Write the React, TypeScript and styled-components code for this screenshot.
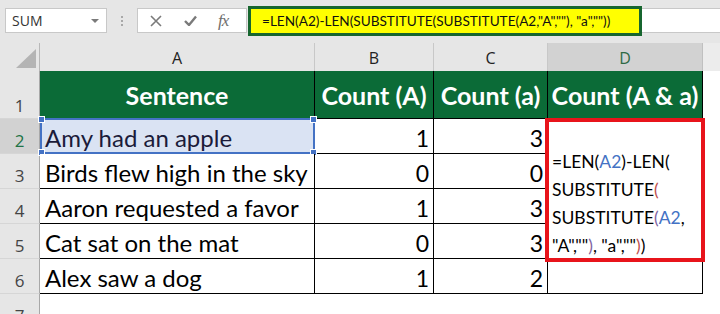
import React from 'react';
import styled, { createGlobalStyle } from 'styled-components';

const Global = createGlobalStyle`
  html, body { margin: 0; padding: 0; background: #fff; }
  body { width: 720px; height: 314px; overflow: hidden; font-family: Lato, "Liberation Sans", sans-serif; }
`;

const Page = styled.div`
  width: 720px;
  height: 314px;
  overflow: hidden;
  display: flex;
  flex-direction: column;
  background: #fff;
`;

const Toolbar = styled.div`
  height: 43px;
  flex: none;
  box-sizing: border-box;
  background: #e6e6e6;
  display: flex;
  align-items: flex-start;
  padding: 8px 0 0 5px;
`;

const NameBox = styled.div`
  width: 102px;
  height: 25px;
  box-sizing: border-box;
  background: #fff;
  border: 1px solid #c8c8c8;
  display: flex;
  align-items: center;
  justify-content: space-between;
  padding: 0 7px 0 6px;
  font-family: "Open Sans", sans-serif;
  font-size: 14px;
  color: #333;
`;

const Caret = styled.span`
  width: 0;
  height: 0;
  border-left: 4px solid transparent;
  border-right: 4px solid transparent;
  border-top: 4px solid #7a7a7a;
`;

const Grip = styled.div`
  width: 30px;
  height: 25px;
  display: flex;
  flex-direction: column;
  align-items: center;
  justify-content: center;
  gap: 2px;
`;

const Dot = styled.span`
  width: 2px;
  height: 2px;
  background: #a8a8a8;
`;

const FxBox = styled.div`
  width: 110px;
  height: 25px;
  box-sizing: border-box;
  background: #fff;
  border: 1px solid #c8c8c8;
  display: flex;
  align-items: center;
  padding-left: 12px;
  gap: 22px;
  color: #7a7a7a;
`;

const FxLabel = styled.span`
  font-family: "Liberation Serif", serif;
  font-style: italic;
  font-size: 17px;
  color: #6e6e6e;
  letter-spacing: -1px;
  margin-left: -1px;
`;

const FormulaInput = styled.div`
  flex: 1;
  height: 25px;
  margin-left: 1px;
  box-sizing: border-box;
  background: #fff;
  border-top: 1px solid #c8c8c8;
  border-bottom: 1px solid #c8c8c8;
  display: flex;
  align-items: center;
`;

const Highlight = styled.div`
  width: 394px;
  height: 30px;
  flex: none;
  box-sizing: border-box;
  border: 3px solid #17662f;
  background: #ffff00;
  display: flex;
  align-items: center;
  padding-left: 11px;
  white-space: nowrap;
  font-family: Lato, sans-serif;
  font-size: 13.6px;
  color: #111;
`;

const Sheet = styled.div`
  position: relative;
  flex: none;
  display: grid;
  grid-template-columns: 40px 275px 119px 114px 155px 1fr;
  grid-template-rows: 28px 48px repeat(5, 35px) 35px;
`;

const Corner = styled.div`
  background: #e6e6e6;
  border-right: 1px solid #b8b8b8;
  display: flex;
  align-items: flex-end;
  justify-content: flex-end;
  padding: 0 3px 3px 0;
`;

const ColHead = styled.div<{ $active?: boolean }>`
  background: ${p => (p.$active ? '#d2d2d2' : '#e6e6e6')};
  border-right: 1px solid ${p => (p.$active ? '#c0c0c0' : '#c8c8c8')};
  display: flex;
  align-items: center;
  justify-content: center;
  font-family: "Open Sans", sans-serif;
  font-size: 16px;
  color: ${p => (p.$active ? '#2e6a45' : '#222')};
  padding-top: 2px;
`;

const ColHeadRest = styled.div`
  background: #ececec;
`;

const RowHead = styled.div<{ $active?: boolean }>`
  background: ${p => (p.$active ? '#d2d2d2' : '#e6e6e6')};
  border-right: 1px solid #a8a8a8;
  border-bottom: 1px solid #d6d6d6;
  display: flex;
  align-items: flex-end;
  justify-content: center;
  padding-bottom: 4px;
  font-family: "Open Sans", sans-serif;
  font-size: 17px;
  line-height: 1;
  color: ${p => (p.$active ? '#217346' : '#444')};
`;

const HeadCell = styled.div`
  background: #0b6b37;
  border-right: 1px solid #000;
  border-bottom: 1px solid #000;
  display: flex;
  align-items: center;
  justify-content: center;
  font-weight: 700;
  font-size: 25px;
  color: #fff;
  white-space: nowrap;
  overflow: hidden;
`;

const TextCell = styled.div<{ $selected?: boolean }>`
  position: relative;
  background: ${p => (p.$selected ? '#dae3f3' : '#fff')};
  border-right: 1px solid #000;
  border-bottom: 1px solid #000;
  display: flex;
  align-items: center;
  padding: 3px 0 0 5px;
  font-size: 24px;
  color: ${p => (p.$selected ? '#1b1b3a' : '#000')};
  white-space: nowrap;
`;

const SelFrame = styled.div`
  position: absolute;
  left: 0;
  top: -1px;
  right: -1px;
  bottom: -1px;
  border: 2px solid #4472c4;
  pointer-events: none;
`;

const Handle = styled.span<{ $x: 'l' | 'r'; $y: 't' | 'b' }>`
  position: absolute;
  width: 5px;
  height: 5px;
  background: #4472c4;
  border: 1px solid #fff;
  ${p => (p.$x === 'l' ? 'left: -4px;' : 'right: -4px;')}
  ${p => (p.$y === 't' ? 'top: -4px;' : 'bottom: -4px;')}
`;

const NumCell = styled.div`
  background: #fff;
  border-right: 1px solid #000;
  border-bottom: 1px solid #000;
  display: flex;
  align-items: center;
  justify-content: flex-end;
  padding: 3px 4px 0 0;
  font-size: 23px;
  color: #000;
`;

const EmptyCell = styled.div`
  background: #fff;
  border-right: 1px solid #000;
  border-bottom: 1px solid #000;
`;

const BlankCell = styled.div`
  background: #fff;
`;

const FormulaBox = styled.div`
  position: absolute;
  left: 545px;
  top: 75px;
  width: 160px;
  height: 144px;
  box-sizing: border-box;
  border: 4px solid #e8141b;
  background: #fff;
  display: flex;
  flex-direction: column;
  justify-content: flex-start;
  padding: 26px 0 0 3px;
  font-size: 17.5px;
  line-height: 28px;
  color: #000;
  white-space: nowrap;
`;

const Ref = styled.span`
  color: #4472c4;
`;

const Paren = styled.span<{ $tone: 'red' | 'purple' }>`
  color: ${p => (p.$tone === 'red' ? '#c0504d' : '#8064a2')};
`;

const rows = [
  { text: 'Amy had an apple', a: 1, b: 3 },
  { text: 'Birds flew high in the sky', a: 0, b: 0 },
  { text: 'Aaron requested a favor', a: 1, b: 3 },
  { text: 'Cat sat on the mat', a: 0, b: 3 },
  { text: 'Alex saw a dog', a: 1, b: 2 },
];

export default function App() {
  return (
    <Page>
      <Global />
      <Toolbar>
        <NameBox>
          <span>SUM</span>
          <Caret />
        </NameBox>
        <Grip>
          <Dot />
          <Dot />
          <Dot />
        </Grip>
        <FxBox>
          <svg width="12" height="12" viewBox="0 0 12 12">
            <path d="M1 1 L11 11 M11 1 L1 11" stroke="#7a7a7a" strokeWidth="1.6" fill="none" />
          </svg>
          <svg width="13" height="11" viewBox="0 0 13 11">
            <path d="M1 6 L5 10 L12 1.5" stroke="#7a7a7a" strokeWidth="2.4" fill="none" />
          </svg>
          <FxLabel>fx</FxLabel>
        </FxBox>
        <FormulaInput>
          <Highlight>=LEN(A2)-LEN(SUBSTITUTE(SUBSTITUTE(A2,"A",""), "a",""))</Highlight>
        </FormulaInput>
      </Toolbar>
      <Sheet>
        <Corner>
          <svg width="20" height="19" viewBox="0 0 20 19">
            <polygon points="0,19 20,0 20,19" fill="#b4b4b4" />
          </svg>
        </Corner>
        <ColHead>A</ColHead>
        <ColHead>B</ColHead>
        <ColHead>C</ColHead>
        <ColHead $active>D</ColHead>
        <ColHeadRest />

        <RowHead>1</RowHead>
        <HeadCell>Sentence</HeadCell>
        <HeadCell>Count (A)</HeadCell>
        <HeadCell>Count (a)</HeadCell>
        <HeadCell>Count (A &amp; a)</HeadCell>
        <BlankCell />

        {rows.map((r, i) => (
          <React.Fragment key={r.text}>
            <RowHead $active={i === 0}>{i + 2}</RowHead>
            <TextCell $selected={i === 0}>
              {r.text}
              {i === 0 && (
                <SelFrame>
                  <Handle $x="l" $y="t" />
                  <Handle $x="r" $y="t" />
                  <Handle $x="l" $y="b" />
                  <Handle $x="r" $y="b" />
                </SelFrame>
              )}
            </TextCell>
            <NumCell>{r.a}</NumCell>
            <NumCell>{r.b}</NumCell>
            <EmptyCell />
            <BlankCell />
          </React.Fragment>
        ))}

        <RowHead>7</RowHead>
        <BlankCell />
        <BlankCell />
        <BlankCell />
        <BlankCell />
        <BlankCell />

        <FormulaBox>
          <div>
            =LEN(<Ref>A2</Ref>)-LEN(
          </div>
          <div>
            SUBSTITUTE<Paren $tone="red">(</Paren>
          </div>
          <div>
            SUBSTITUTE<Paren $tone="purple">(</Paren>
            <Ref>A2</Ref>,
          </div>
          <div>
            "A",""<Paren $tone="purple">)</Paren>, "a",""<Paren $tone="red">)</Paren>)
          </div>
        </FormulaBox>
      </Sheet>
    </Page>
  );
}
